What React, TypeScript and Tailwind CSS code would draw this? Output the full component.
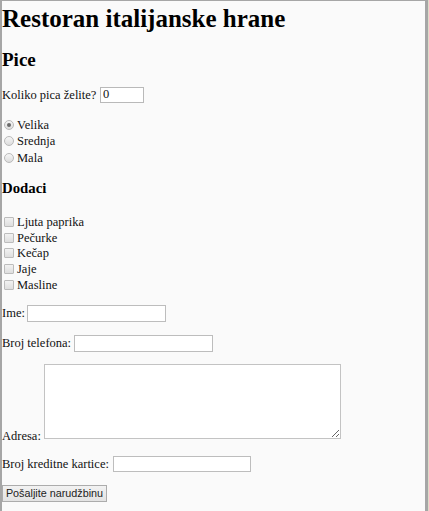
const pizzaSizes = [
  { label: 'Velika', checked: true },
  { label: 'Srednja', checked: false },
  { label: 'Mala', checked: false },
];

const extras = ['Ljuta paprika', 'Pečurke', 'Kečap', 'Jaje', 'Masline'];

function Radio({ checked }: { checked: boolean }) {
  return (
    <span className="ml-[1.5px] mr-[3.5px] flex h-[10px] w-[10px] shrink-0 items-center justify-center rounded-full border border-[#b9b9b9] bg-gradient-to-b from-[#f6f6f6] to-[#dcdcdc]">
      {checked && <span className="h-[4px] w-[4px] rounded-full bg-[#6a6a6a]" />}
    </span>
  );
}

function Checkbox() {
  return (
    <span className="ml-[1.5px] mr-[3.5px] h-[10px] w-[10px] shrink-0 rounded-[1px] border border-[#bcbcbc] bg-gradient-to-b from-[#f2f2f2] to-[#dedede]" />
  );
}

export default function App() {
  return (
    <div className="h-[511px] w-[429px] overflow-hidden bg-[#dedbc9]">
      <div className="h-[511px] w-[428px] border-l-2 border-r-[3px] border-t border-[#a6a6a6] bg-[#fafafa] font-['Liberation_Serif',serif] text-[12.5px] leading-[14px] text-[#111]">
        <h1 className="mt-[3px] text-[25px] font-bold leading-[29px] text-black">
          Restoran italijanske hrane
        </h1>

        {/* PICE */}
        <h2 className="mt-[15.6px] text-[19px] font-bold leading-[22px] text-black">Pice</h2>

        <div className="mt-[16.4px] flex h-[16px] items-center">
          <span className="w-[98px] shrink-0 whitespace-nowrap">Koliko pica želite?</span>
          <input
            defaultValue="0"
            className="h-[16px] w-[44px] border border-[#b9b9b9] bg-white px-[2px] font-['Liberation_Serif',serif] text-[12.5px] text-[#111] outline-none"
          />
        </div>

        <div className="mt-[14px] flex flex-col">
          {pizzaSizes.map((item) => (
            <div key={item.label} className="flex h-[16.3px] items-center">
              <Radio checked={item.checked} />
              <span>{item.label}</span>
            </div>
          ))}
        </div>

        {/* DODACI */}
        <h3 className="mt-[14px] text-[14.8px] font-bold leading-[17px] text-black">Dodaci</h3>

        <div className="mt-[17px] flex flex-col">
          {extras.map((item) => (
            <div key={item} className="flex h-[15.75px] items-center">
              <Checkbox />
              <span>{item}</span>
            </div>
          ))}
        </div>

        {/* PODACI */}
        <div className="mt-[12.25px] flex h-[17px] items-center">
          <span className="w-[25px] shrink-0 whitespace-nowrap">Ime:</span>
          <input className="h-[17px] w-[139px] border border-[#bdbdbd] bg-white outline-none" />
        </div>

        <div className="mt-[13px] flex h-[17px] items-center">
          <span className="w-[72px] shrink-0 whitespace-nowrap">Broj telefona:</span>
          <input className="h-[17px] w-[139px] border border-[#bdbdbd] bg-white outline-none" />
        </div>

        <div className="mt-[12px] flex items-end">
          <span className="mb-[-4px] w-[42px] shrink-0 whitespace-nowrap">Adresa:</span>
          <textarea className="block h-[75px] w-[297px] border border-[#c3c3c3] bg-white outline-none" />
        </div>

        <div className="mt-[17px] flex h-[16px] items-center">
          <span className="w-[111px] shrink-0 whitespace-nowrap">Broj kreditne kartice:</span>
          <input className="h-[16px] w-[138px] border border-[#bdbdbd] bg-white outline-none" />
        </div>

        <button className="mt-[13px] block h-[17px] w-[105px] border border-[#acacac] bg-gradient-to-b from-[#f2f2f2] to-[#e3e3e3] p-0 font-['Liberation_Sans',sans-serif] text-[10.8px] leading-[15px] text-[#222]">
          Pošaljite narudžbinu
        </button>
      </div>
    </div>
  );
}
